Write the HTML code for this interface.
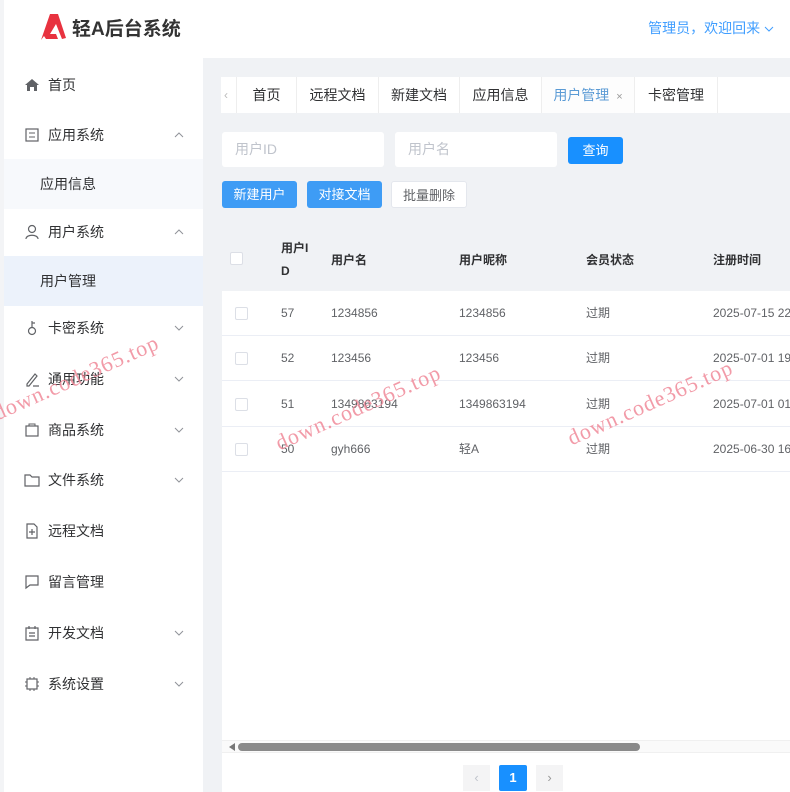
<!DOCTYPE html>
<html><head><meta charset="utf-8"><style>
*{box-sizing:border-box;margin:0;padding:0}
body{width:790px;height:792px;overflow:hidden;background:#f0f2f5;font-family:"Liberation Sans","Noto Sans CJK SC",sans-serif;position:relative;color:#303133}
.hdr{position:absolute;left:0;top:0;width:790px;height:58px;background:#fff}
.logo{position:absolute;left:38px;top:12px}
.brand{position:absolute;left:72px;top:14px;font-size:19px;font-weight:bold;color:#333}
.user{position:absolute;right:16px;top:18px;font-size:14px;color:#409eff}
.side{position:absolute;left:4px;top:58px;width:199px;height:734px;background:#fff}
.edge{position:absolute;left:0;top:0;width:4px;height:792px;background:#f3f4f6}
.mi{position:absolute;left:0;width:199px;height:50px;font-size:14px;color:#303133;line-height:50px}
.mi .ic{position:absolute;left:20px;top:17px;width:16px;height:16px}
.mi .t{position:absolute;left:44px}
.mi .ar{position:absolute;left:170px;top:21px;width:10px;height:8px}
.sub{background:#f7f9fc}
.sub .t{left:36px}
.act{background:#ecf2fb}
.tabs{position:absolute;left:221px;top:77px;width:569px;height:36px;background:#fff;overflow:hidden}
.tab{position:absolute;top:0;height:36px;line-height:36px;font-size:14px;text-align:center;border-left:1px solid #eee;color:#303133}
.inp{position:absolute;top:132px;width:162px;height:35px;background:#fff;border-radius:3px;font-size:14px;color:#c0c4cc;padding-left:13px;line-height:35px}
.btn{position:absolute;height:27px;line-height:27px;font-size:13px;color:#fff;text-align:center;border-radius:3px}
.th{position:absolute;top:225px;font-size:12px;font-weight:bold;color:#303133}
.row{position:absolute;left:222px;width:568px;height:45px;background:#fff;border-bottom:1px solid #ebeef5;font-size:12px;color:#606266;overflow:hidden}
.row span{position:absolute;top:0;line-height:44px;white-space:nowrap}
.cb{position:absolute;width:13px;height:13px;border:1px solid #dcdfe6;background:#fff;border-radius:2px}
.wm{position:absolute;font-family:"Liberation Serif",serif;font-size:22px;color:#f08a9a;transform:rotate(-24deg);transform-origin:left bottom;white-space:nowrap;letter-spacing:1px;opacity:.85}
</style></head><body>
<div class="hdr">
<svg class="logo" width="30" height="30" viewBox="0 0 30 30"><path d="M3 28 L12 2 L20 2 L28 26 L24 27 L18 12 L12 22 L18 22 L20 27 L8 27 L6 24 Z" fill="#e8323f"/></svg>
<div class="brand">轻A后台系统</div>
<div class="user">管理员，欢迎回来 <svg width="10" height="8" viewBox="0 0 10 8"><path d="M1 2 L5 6 L9 2" fill="none" stroke="#409eff"/></svg></div>
</div>
<div class="edge"></div>
<div class="side">
<div class="mi" style="top:2px"><svg class="ic" viewBox="0 0 16 16"><path d="M1 8 L8 2 L15 8 L13 8 L13 14 L10 14 L10 10 L6 10 L6 14 L3 14 L3 8 Z" fill="#606266"/></svg><span class="t">首页</span></div>
<div class="mi" style="top:52px"><svg class="ic" viewBox="0 0 16 16"><rect x="2" y="2" width="12" height="12" fill="none" stroke="#606266" stroke-width="1.2"/><path d="M5 6h6M5 10h6" stroke="#606266"/></svg><span class="t">应用系统</span><svg class="ar" viewBox="0 0 10 8"><path d="M1 6 L5 2 L9 6" fill="none" stroke="#909399"/></svg></div>
<div class="mi sub" style="top:101px"><span class="t">应用信息</span></div>
<div class="mi" style="top:149px"><svg class="ic" viewBox="0 0 16 16"><circle cx="8" cy="5" r="3.5" fill="none" stroke="#606266" stroke-width="1.2"/><path d="M2 15 C2 10 14 10 14 15" fill="none" stroke="#606266" stroke-width="1.2"/></svg><span class="t">用户系统</span><svg class="ar" viewBox="0 0 10 8"><path d="M1 6 L5 2 L9 6" fill="none" stroke="#909399"/></svg></div>
<div class="mi sub act" style="top:198px"><span class="t">用户管理</span></div>
<div class="mi" style="top:245px"><svg class="ic" viewBox="0 0 16 16"><circle cx="8" cy="11" r="3.5" fill="none" stroke="#606266" stroke-width="1.2"/><path d="M8 7.5V1M8 3h3" stroke="#606266" stroke-width="1.2"/></svg><span class="t">卡密系统</span><svg class="ar" viewBox="0 0 10 8"><path d="M1 2 L5 6 L9 2" fill="none" stroke="#909399"/></svg></div>
<div class="mi" style="top:296px"><svg class="ic" viewBox="0 0 16 16"><path d="M3 13 L11 3 L13 5 L5 15 L3 15 Z M9 15h6" fill="none" stroke="#606266" stroke-width="1.2"/></svg><span class="t">通用功能</span><svg class="ar" viewBox="0 0 10 8"><path d="M1 2 L5 6 L9 2" fill="none" stroke="#909399"/></svg></div>
<div class="mi" style="top:347px"><svg class="ic" viewBox="0 0 16 16"><rect x="2" y="4" width="12" height="10" fill="none" stroke="#606266" stroke-width="1.2"/><path d="M5 4V2h6v2" fill="none" stroke="#606266"/></svg><span class="t">商品系统</span><svg class="ar" viewBox="0 0 10 8"><path d="M1 2 L5 6 L9 2" fill="none" stroke="#909399"/></svg></div>
<div class="mi" style="top:397px"><svg class="ic" viewBox="0 0 16 16"><path d="M1 3h5l2 2h7v9H1Z" fill="none" stroke="#606266" stroke-width="1.2"/></svg><span class="t">文件系统</span><svg class="ar" viewBox="0 0 10 8"><path d="M1 2 L5 6 L9 2" fill="none" stroke="#909399"/></svg></div>
<div class="mi" style="top:448px"><svg class="ic" viewBox="0 0 16 16"><path d="M3 1h7l3 3v11H3Z M8 6v6M5 9h6" fill="none" stroke="#606266" stroke-width="1.2"/></svg><span class="t">远程文档</span></div>
<div class="mi" style="top:499px"><svg class="ic" viewBox="0 0 16 16"><path d="M2 2h12v9H6l-4 3Z" fill="none" stroke="#606266" stroke-width="1.2"/></svg><span class="t">留言管理</span></div>
<div class="mi" style="top:550px"><svg class="ic" viewBox="0 0 16 16"><path d="M2 3h12v12H2Z M5 1v3M11 1v3M5 8h6M5 11h6" fill="none" stroke="#606266" stroke-width="1.2"/></svg><span class="t">开发文档</span><svg class="ar" viewBox="0 0 10 8"><path d="M1 2 L5 6 L9 2" fill="none" stroke="#909399"/></svg></div>
<div class="mi" style="top:601px"><svg class="ic" viewBox="0 0 16 16"><rect x="3" y="3" width="10" height="10" fill="none" stroke="#606266" stroke-width="1.2"/><path d="M6 1v2M10 1v2M6 13v2M10 13v2M1 6h2M1 10h2M13 6h2M13 10h2" stroke="#606266"/></svg><span class="t">系统设置</span><svg class="ar" viewBox="0 0 10 8"><path d="M1 2 L5 6 L9 2" fill="none" stroke="#909399"/></svg></div>
</div>

<div class="tabs">
<div style="position:absolute;left:3px;top:0;line-height:36px;color:#bbb;font-size:12px">‹</div>
<div class="tab" style="left:15px;width:60px">首页</div>
<div class="tab" style="left:75px;width:82px">远程文档</div>
<div class="tab" style="left:157px;width:81px">新建文档</div>
<div class="tab" style="left:238px;width:82px">应用信息</div>
<div class="tab" style="left:320px;width:93px;color:#5b9bd5;background:#fdfdfd">用户管理 <span style="font-size:11px;color:#999">&nbsp;×</span></div>
<div class="tab" style="left:413px;width:83px">卡密管理</div>
<div class="tab" style="left:496px;width:80px"></div>
</div>

<div class="inp" style="left:222px">用户ID</div>
<div class="inp" style="left:395px">用户名</div>
<div class="btn" style="left:568px;top:137px;width:55px;background:#1890ff">查询</div>
<div class="btn" style="left:222px;top:181px;width:75px;background:#3e9cf5">新建用户</div>
<div class="btn" style="left:307px;top:181px;width:75px;background:#3e9cf5">对接文档</div>
<div class="btn" style="left:391px;top:181px;width:76px;background:#fff;color:#606266;border:1px solid #e4e7ed">批量删除</div>

<div class="cb" style="left:230px;top:252px"></div>
<div class="th" style="left:281px;top:237px;line-height:23px;width:30px">用户I<br>D</div>
<div class="th" style="left:331px;top:251px">用户名</div>
<div class="th" style="left:459px;top:251px">用户昵称</div>
<div class="th" style="left:586px;top:251px">会员状态</div>
<div class="th" style="left:713px;top:251px">注册时间</div>

<div style="position:absolute;left:222px;top:291px;width:568px;height:470px;background:#fff"></div>
<div class="row" style="top:291px"><div class="cb" style="left:13px;top:16px"></div><span style="left:59px">57</span><span style="left:109px">1234856</span><span style="left:237px">1234856</span><span style="left:364px">过期</span><span style="left:491px">2025-07-15 22:1</span></div>
<div class="row" style="top:336px"><div class="cb" style="left:13px;top:16px"></div><span style="left:59px">52</span><span style="left:109px">123456</span><span style="left:237px">123456</span><span style="left:364px">过期</span><span style="left:491px">2025-07-01 19:4</span></div>
<div class="row" style="top:382px"><div class="cb" style="left:13px;top:16px"></div><span style="left:59px">51</span><span style="left:109px">1349863194</span><span style="left:237px">1349863194</span><span style="left:364px">过期</span><span style="left:491px">2025-07-01 01:0</span></div>
<div class="row" style="top:427px"><div class="cb" style="left:13px;top:16px"></div><span style="left:59px">50</span><span style="left:109px">gyh666</span><span style="left:237px">轻A</span><span style="left:364px">过期</span><span style="left:491px">2025-06-30 16:0</span></div>

<div style="position:absolute;left:222px;top:740px;width:568px;height:13px;border-top:1px solid #f0f0f0;border-bottom:1px solid #f0f0f0;background:#fafafa"></div>
<div style="position:absolute;left:229px;top:743px;width:0;height:0;border-top:4px solid transparent;border-bottom:4px solid transparent;border-right:6px solid #777"></div>
<div style="position:absolute;left:238px;top:743px;width:402px;height:8px;border-radius:4px;background:#8a8a8a"></div>
<div style="position:absolute;left:222px;top:753px;width:568px;height:39px;background:#fff"></div>
<div style="position:absolute;left:463px;top:765px;width:27px;height:26px;background:#f4f4f5;color:#c0c4cc;text-align:center;line-height:26px;font-size:13px">‹</div>
<div style="position:absolute;left:499px;top:765px;width:28px;height:26px;background:#1890ff;color:#fff;text-align:center;line-height:26px;font-size:13px;font-weight:bold;border-radius:2px">1</div>
<div style="position:absolute;left:536px;top:765px;width:27px;height:26px;background:#f4f4f5;color:#999;text-align:center;line-height:26px;font-size:13px">›</div>

<div class="wm" style="left:0;top:400px">down.code365.top</div>
<div class="wm" style="left:282px;top:430px">down.code365.top</div>
<div class="wm" style="left:574px;top:425px">down.code365.top</div>
</body></html>
